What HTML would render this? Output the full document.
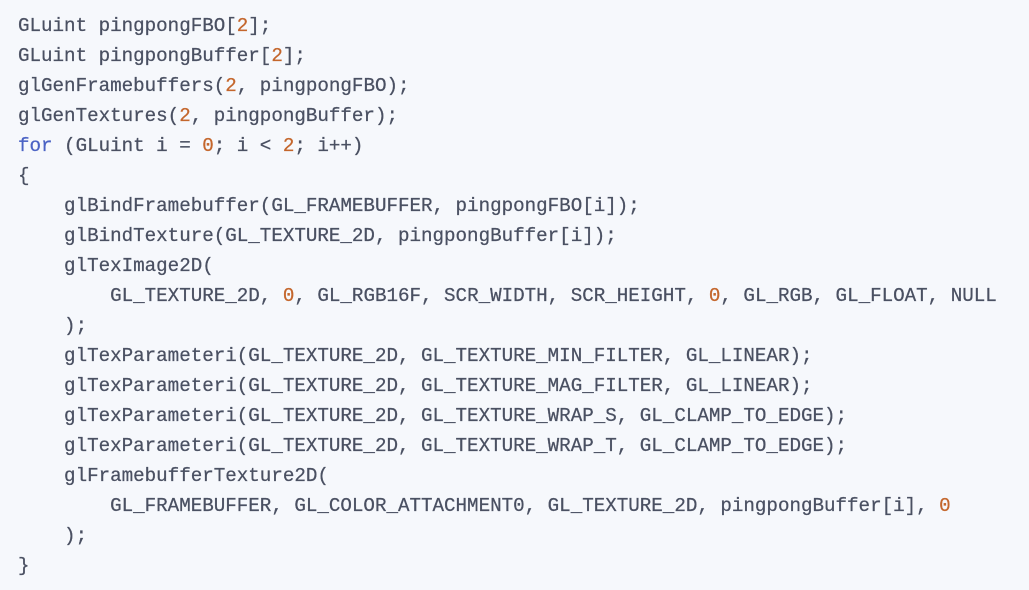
<!DOCTYPE html>
<html><head><meta charset="utf-8"><style>
html,body{margin:0;padding:0;background:#f6f8fc;width:1029px;height:590px;overflow:hidden}
pre{margin:0;padding:11px 0 0 18px;font-family:"Liberation Mono","DejaVu Sans Mono",monospace;font-size:19.2px;line-height:30px;color:#4a5062;white-space:pre;-webkit-text-stroke:0.25px #4a5062}
.n{color:#c4662c;-webkit-text-stroke-color:#c4662c}.k{color:#4a62c4;-webkit-text-stroke-color:#4a62c4}
</style></head><body><pre>GLuint pingpongFBO[<span class="n">2</span>];
GLuint pingpongBuffer[<span class="n">2</span>];
glGenFramebuffers(<span class="n">2</span>, pingpongFBO);
glGenTextures(<span class="n">2</span>, pingpongBuffer);
<span class="k">for</span> (GLuint i = <span class="n">0</span>; i &lt; <span class="n">2</span>; i++)
{
    glBindFramebuffer(GL_FRAMEBUFFER, pingpongFBO[i]);
    glBindTexture(GL_TEXTURE_2D, pingpongBuffer[i]);
    glTexImage2D(
        GL_TEXTURE_2D, <span class="n">0</span>, GL_RGB16F, SCR_WIDTH, SCR_HEIGHT, <span class="n">0</span>, GL_RGB, GL_FLOAT, NULL
    );
    glTexParameteri(GL_TEXTURE_2D, GL_TEXTURE_MIN_FILTER, GL_LINEAR);
    glTexParameteri(GL_TEXTURE_2D, GL_TEXTURE_MAG_FILTER, GL_LINEAR);
    glTexParameteri(GL_TEXTURE_2D, GL_TEXTURE_WRAP_S, GL_CLAMP_TO_EDGE);
    glTexParameteri(GL_TEXTURE_2D, GL_TEXTURE_WRAP_T, GL_CLAMP_TO_EDGE);
    glFramebufferTexture2D(
        GL_FRAMEBUFFER, GL_COLOR_ATTACHMENT0, GL_TEXTURE_2D, pingpongBuffer[i], <span class="n">0</span>
    );
}</pre></body></html>
